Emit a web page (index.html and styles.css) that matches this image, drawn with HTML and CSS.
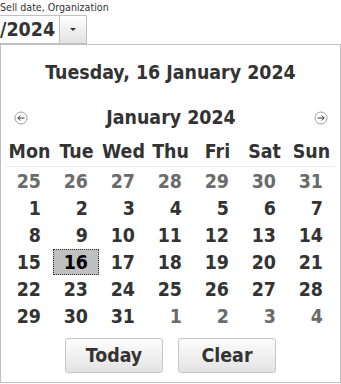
FILE: index.html
```html
<!DOCTYPE html>
<html>
<head>
<meta charset="utf-8">
<link rel="stylesheet" href="styles.css">
</head>
<body>
<div class="label">Sell date, Organization</div>
<div class="field">
  <div class="field-input">/2024</div>
  <div class="field-btn"><span class="caret"></span></div>
</div>
<div class="popup">
  <div class="title">Tuesday, 16 January 2024</div>
  <div class="nav">
    <span class="nav-btn"><svg width="14" height="14" viewBox="0 0 14 14"><circle cx="7" cy="7" r="6" fill="#fff" stroke="#a0a0a0"/><path d="M10.5 7H3.8M6.3 4.5L3.8 7L6.3 9.5" fill="none" stroke="#333" stroke-width="1"/></svg></span>
    <div class="month">January 2024</div>
    <span class="nav-btn"><svg width="14" height="14" viewBox="0 0 14 14"><circle cx="7" cy="7" r="6" fill="#fff" stroke="#a0a0a0"/><path d="M3.5 7H10.2M7.7 4.5L10.2 7L7.7 9.5" fill="none" stroke="#333" stroke-width="1"/></svg></span>
  </div>
  <div class="grid">
    <div class="dow">Mon</div><div class="dow">Tue</div><div class="dow">Wed</div><div class="dow">Thu</div><div class="dow">Fri</div><div class="dow">Sat</div><div class="dow">Sun</div>
    <div class="day other"><span class="d">25</span></div>
    <div class="day other"><span class="d">26</span></div>
    <div class="day other"><span class="d">27</span></div>
    <div class="day other"><span class="d">28</span></div>
    <div class="day other"><span class="d">29</span></div>
    <div class="day other"><span class="d">30</span></div>
    <div class="day other"><span class="d">31</span></div>
    <div class="day"><span class="d">1</span></div>
    <div class="day"><span class="d">2</span></div>
    <div class="day"><span class="d">3</span></div>
    <div class="day"><span class="d">4</span></div>
    <div class="day"><span class="d">5</span></div>
    <div class="day"><span class="d">6</span></div>
    <div class="day"><span class="d">7</span></div>
    <div class="day"><span class="d">8</span></div>
    <div class="day"><span class="d">9</span></div>
    <div class="day"><span class="d">10</span></div>
    <div class="day"><span class="d">11</span></div>
    <div class="day"><span class="d">12</span></div>
    <div class="day"><span class="d">13</span></div>
    <div class="day"><span class="d">14</span></div>
    <div class="day"><span class="d">15</span></div>
    <div class="day"><span class="d sel">16</span></div>
    <div class="day"><span class="d">17</span></div>
    <div class="day"><span class="d">18</span></div>
    <div class="day"><span class="d">19</span></div>
    <div class="day"><span class="d">20</span></div>
    <div class="day"><span class="d">21</span></div>
    <div class="day"><span class="d">22</span></div>
    <div class="day"><span class="d">23</span></div>
    <div class="day"><span class="d">24</span></div>
    <div class="day"><span class="d">25</span></div>
    <div class="day"><span class="d">26</span></div>
    <div class="day"><span class="d">27</span></div>
    <div class="day"><span class="d">28</span></div>
    <div class="day"><span class="d">29</span></div>
    <div class="day"><span class="d">30</span></div>
    <div class="day"><span class="d">31</span></div>
    <div class="day other"><span class="d">1</span></div>
    <div class="day other"><span class="d">2</span></div>
    <div class="day other"><span class="d">3</span></div>
    <div class="day other"><span class="d">4</span></div>
  </div>
  <div class="actions">
    <button class="btn">Today</button>
    <button class="btn">Clear</button>
  </div>
</div>
</body>
</html>
```
FILE: styles.css
```css
html, body {
  margin: 0;
  padding: 0;
  background: #fff;
}
body {
  width: 341px;
  font-family: "DejaVu Sans Condensed", "DejaVu Sans", sans-serif;
  font-stretch: condensed;
  color: #333;
}
.label {
  font-size: 10.6px;
  line-height: 15px;
  height: 15px;
  color: #333;
  white-space: nowrap;
}
.field {
  display: flex;
  height: 29px;
  box-sizing: border-box;
  width: 87px;
}
.field-input {
  width: 59px;
  box-sizing: border-box;
  border-top: 1px solid #c0c0c0;
  border-bottom: 1px solid #c0c0c0;
  font-size: 19.5px;
  font-weight: bold;
  line-height: 27px;
  padding-left: 0;
  color: #333;
  overflow: hidden;
  white-space: nowrap;
}
.field-btn {
  width: 28px;
  box-sizing: border-box;
  border: 1px solid #c0c0c0;
  background: linear-gradient(#ffffff, #e2e2e2);
  display: flex;
  align-items: center;
  justify-content: center;
}
.caret {
  width: 0;
  height: 0;
  border-left: 3px solid transparent;
  border-right: 3px solid transparent;
  border-top: 3px solid #333;
}
.popup {
  width: 341px;
  height: 339px;
  box-sizing: border-box;
  border: 1px solid #c0c0c0;
  font-size: 19.4px;
  font-weight: bold;
  padding-top: 16px;
}
.title {
  text-align: center;
  line-height: 24px;
  height: 24px;
}
.nav {
  display: flex;
  align-items: center;
  margin-top: 21px;
  height: 24px;
  padding: 0 12px 0 13px;
}
.nav-btn {
  display: flex;
  width: 14px;
  height: 14px;
}
.month {
  flex: 1;
  text-align: center;
  line-height: 24px;
}
.grid {
  display: grid;
  grid-template-columns: repeat(7, 47px);
  margin: 10px 0 0 5px;
}
.dow {
  text-align: center;
  line-height: 24px;
  padding-bottom: 2px;
  border-bottom: 1px solid #ebebeb;
  margin-bottom: 1px;
}
.day {
  height: 27px;
}
.d {
  display: block;
  width: 46px;
  height: 26px;
  box-sizing: border-box;
  border: 1px dotted transparent;
  text-align: right;
  padding-right: 10px;
  line-height: 25px;
  color: #333;
}
.other .d {
  color: #6b6b6b;
}
.d.sel {
  background: #c0c0c0;
  border-color: #333;
  color: #000;
}
.actions {
  display: flex;
  justify-content: center;
  gap: 15px;
  margin-top: 8px;
}
.btn {
  width: 98px;
  height: 35px;
  box-sizing: border-box;
  border: 1px solid #c6c6c6;
  border-radius: 3px;
  background: linear-gradient(#fdfdfd, #e3e3e3);
  font-family: inherit;
  font-stretch: condensed;
  font-size: 19.4px;
  font-weight: bold;
  color: #333;
  padding: 0;
  margin: 0;
}
```
